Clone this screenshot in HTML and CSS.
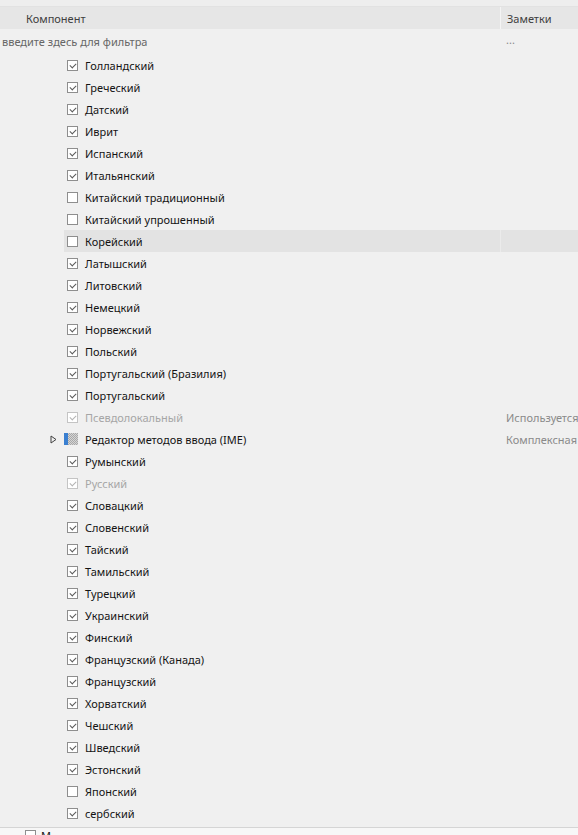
FILE: index.html
```html
<!DOCTYPE html>
<html lang="ru">
<head>
<meta charset="utf-8">
<link rel="stylesheet" href="styles.css">
</head>
<body>
<div class="top-strip"></div>
<div class="header">
  <div class="hcell hcomp">Компонент</div>
  <div class="hcell hnotes">Заметки</div>
</div>
<div class="filter">
  <div class="fcell">введите здесь для фильтра</div>
  <div class="fcell fnotes">...</div>
</div>
<div class="list">
  <div class="row"><div class="exp"></div><div class="name"><span class="cb on"></span>Голландский</div><div class="note"></div></div>
  <div class="row"><div class="exp"></div><div class="name"><span class="cb on"></span>Греческий</div><div class="note"></div></div>
  <div class="row"><div class="exp"></div><div class="name"><span class="cb on"></span>Датский</div><div class="note"></div></div>
  <div class="row"><div class="exp"></div><div class="name"><span class="cb on"></span>Иврит</div><div class="note"></div></div>
  <div class="row"><div class="exp"></div><div class="name"><span class="cb on"></span>Испанский</div><div class="note"></div></div>
  <div class="row"><div class="exp"></div><div class="name"><span class="cb on"></span>Итальянский</div><div class="note"></div></div>
  <div class="row"><div class="exp"></div><div class="name"><span class="cb"></span>Китайский традиционный</div><div class="note"></div></div>
  <div class="row"><div class="exp"></div><div class="name"><span class="cb"></span>Китайский упрошенный</div><div class="note"></div></div>
  <div class="row hl"><div class="exp"></div><div class="name"><span class="cb"></span>Корейский</div><div class="note"></div></div>
  <div class="row"><div class="exp"></div><div class="name"><span class="cb on"></span>Латышский</div><div class="note"></div></div>
  <div class="row"><div class="exp"></div><div class="name"><span class="cb on"></span>Литовский</div><div class="note"></div></div>
  <div class="row"><div class="exp"></div><div class="name"><span class="cb on"></span>Немецкий</div><div class="note"></div></div>
  <div class="row"><div class="exp"></div><div class="name"><span class="cb on"></span>Норвежский</div><div class="note"></div></div>
  <div class="row"><div class="exp"></div><div class="name"><span class="cb on"></span>Польский</div><div class="note"></div></div>
  <div class="row"><div class="exp"></div><div class="name"><span class="cb on"></span>Португальский (Бразилия)</div><div class="note"></div></div>
  <div class="row"><div class="exp"></div><div class="name"><span class="cb on"></span>Португальский</div><div class="note"></div></div>
  <div class="row dis"><div class="exp"></div><div class="name"><span class="cb on"></span>Псевдолокальный</div><div class="note">Используется</div></div>
  <div class="row"><div class="exp"><svg class="tri" width="7" height="9" viewBox="0 0 7 9"><path d="M1 1 L6 4.5 L1 8 Z" fill="none" stroke="#404040" stroke-width="1"/></svg></div><div class="name"><span class="ime"></span>Редактор методов ввода (IME)</div><div class="note">Комплексная</div></div>
  <div class="row"><div class="exp"></div><div class="name"><span class="cb on"></span>Румынский</div><div class="note"></div></div>
  <div class="row dis"><div class="exp"></div><div class="name"><span class="cb on"></span>Русский</div><div class="note"></div></div>
  <div class="row"><div class="exp"></div><div class="name"><span class="cb on"></span>Словацкий</div><div class="note"></div></div>
  <div class="row"><div class="exp"></div><div class="name"><span class="cb on"></span>Словенский</div><div class="note"></div></div>
  <div class="row"><div class="exp"></div><div class="name"><span class="cb on"></span>Тайский</div><div class="note"></div></div>
  <div class="row"><div class="exp"></div><div class="name"><span class="cb on"></span>Тамильский</div><div class="note"></div></div>
  <div class="row"><div class="exp"></div><div class="name"><span class="cb on"></span>Турецкий</div><div class="note"></div></div>
  <div class="row"><div class="exp"></div><div class="name"><span class="cb on"></span>Украинский</div><div class="note"></div></div>
  <div class="row"><div class="exp"></div><div class="name"><span class="cb on"></span>Финский</div><div class="note"></div></div>
  <div class="row"><div class="exp"></div><div class="name"><span class="cb on"></span>Французский (Канада)</div><div class="note"></div></div>
  <div class="row"><div class="exp"></div><div class="name"><span class="cb on"></span>Французский</div><div class="note"></div></div>
  <div class="row"><div class="exp"></div><div class="name"><span class="cb on"></span>Хорватский</div><div class="note"></div></div>
  <div class="row"><div class="exp"></div><div class="name"><span class="cb on"></span>Чешский</div><div class="note"></div></div>
  <div class="row"><div class="exp"></div><div class="name"><span class="cb on"></span>Шведский</div><div class="note"></div></div>
  <div class="row"><div class="exp"></div><div class="name"><span class="cb on"></span>Эстонский</div><div class="note"></div></div>
  <div class="row"><div class="exp"></div><div class="name"><span class="cb"></span>Японский</div><div class="note"></div></div>
  <div class="row"><div class="exp"></div><div class="name"><span class="cb on"></span>сербский</div><div class="note"></div></div>
</div>
<div class="bottom">
  <div class="brow"><span class="cb"></span>М</div>
</div>
</body>
</html>
```

FILE: styles.css
```css
html, body {
  margin: 0;
  padding: 0;
}
body {
  width: 578px;
  height: 835px;
  overflow: hidden;
  background: #f0f0f0;
  font-family: "Noto Sans", "Open Sans", sans-serif;
  font-size: 11px;
  color: #141414;
}
.top-strip {
  height: 6px;
  background: #eeeeee;
  border-bottom: 1px solid #e2e2e2;
}
.header {
  display: grid;
  grid-template-columns: 501px 1fr;
  height: 22px;
  background: #e6e6e6;
}
.hcell {
  display: flex;
  align-items: center;
  color: #404040;
}
.hcomp {
  padding-left: 26px;
  border-right: 1px solid #f4f4f4;
}
.hnotes {
  padding-left: 6px;
}
.filter {
  display: grid;
  grid-template-columns: 504px 1fr;
  height: 25px;
  align-items: center;
  color: #666666;
}
.fcell {
  padding-left: 2px;
}
.fnotes {
  padding-left: 2px;
  color: #8a8a8a;
  position: relative;
  top: -2px;
}
.row {
  display: grid;
  grid-template-columns: 64px 437px 1fr;
  height: 22px;
  align-items: stretch;
}
.exp {
  display: flex;
  align-items: center;
  justify-content: flex-end;
  padding-right: 7px;
}
.name {
  display: flex;
  align-items: center;
  padding-left: 3px;
  white-space: nowrap;
}
.note {
  display: flex;
  align-items: center;
  padding-left: 5px;
  color: #8a8a8a;
  white-space: nowrap;
  overflow: hidden;
}
.row.hl .name,
.row.hl .note {
  background: #e3e3e3;
}
.row.hl .name {
  border-right: 1px solid #ebebeb;
}
.row.dis .name {
  color: #a6a6a6;
}
.cb {
  box-sizing: border-box;
  display: inline-block;
  width: 11px;
  height: 11px;
  border: 1px solid #8e8e8e;
  background: #ffffff;
  margin-right: 7px;
  flex: none;
  position: relative;
}
.cb.on::after {
  content: "";
  position: absolute;
  left: 2px;
  top: 0px;
  width: 5px;
  height: 3px;
  border-left: 1.4px solid #5a5a5a;
  border-bottom: 1.4px solid #5a5a5a;
  transform: translate(0, 2px) rotate(-45deg);
  transform-origin: center;
}
.row.dis .cb {
  border-color: #c4c4c4;
}
.row.dis .cb.on::after {
  border-color: #b4b4b4;
}
.ime {
  display: inline-block;
  width: 14px;
  height: 12px;
  margin-left: -3px;
  margin-right: 7px;
  flex: none;
  background:
    linear-gradient(#3a7fd0, #3a7fd0) left / 4px 100% no-repeat,
    repeating-conic-gradient(#a8a8a8 0 25%, #d4d4d4 0 50%) 0 0 / 2px 2px;
}
.bottom {
  margin-top: 3px;
  border-top: 1px solid #d5d5d5;
  background: #f7f7f7;
  height: 20px;
}
.brow {
  display: flex;
  align-items: flex-start;
  padding-left: 25px;
  padding-top: 2px;
  line-height: 12px;
}
.bottom .cb {
  margin-right: 5px;
}
```
